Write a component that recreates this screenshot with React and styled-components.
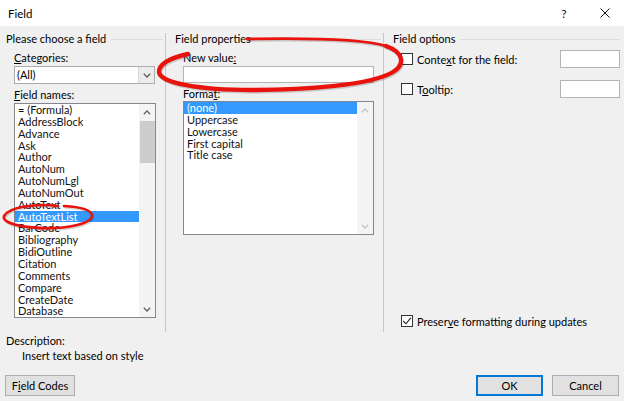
import styled, { createGlobalStyle } from "styled-components";

const GlobalStyle = createGlobalStyle`
  html, body {
    margin: 0;
    padding: 0;
  }
  body {
    background: #f0f0f0;
    font-family: Lato, "Noto Sans", "DejaVu Sans", sans-serif;
    color: #000;
  }
`;

const Dialog = styled.div`
  position: relative;
  width: 624px;
  height: 401px;
  background: #f0f0f0;
  font-size: 11px;
  overflow: hidden;
  display: flex;
  flex-direction: column;
`;

const TitleBar = styled.div`
  flex: none;
  height: 26px;
  background: #fff;
  display: flex;
  align-items: center;
  padding-left: 8px;
`;

const TitleText = styled.div`
  flex: 1;
  font-size: 11.5px;
`;

const TitleButton = styled.div`
  width: ${(p) => p.$w}px;
  height: 26px;
  display: flex;
  align-items: center;
  justify-content: center;
  font-size: 12px;
  color: #111;
`;

const Columns = styled.div`
  display: grid;
  grid-template-columns: 165px 218px 1fr;
  margin-top: 7px;
  height: 299px;
  flex: none;
`;

const Group = styled.section`
  display: flex;
  flex-direction: column;
  min-width: 0;
  padding: 0 ${(p) => p.$padRight}px 0 ${(p) => p.$padLeft}px;
  border-left: ${(p) => (p.$divider ? "1px solid #c6c6c6" : "none")};
`;

const GroupHeader = styled.div`
  display: flex;
  align-items: center;
  gap: 5px;
  height: 12px;
  line-height: 12px;
  white-space: nowrap;
  &::after {
    content: "";
    flex: 1;
    height: 1px;
    background: #dcdcdc;
  }
`;

const Indent = styled.div`
  display: flex;
  flex-direction: column;
  margin-left: 8px;
`;

const FieldLabel = styled.div`
  height: 14px;
  line-height: 14px;
  margin-top: ${(p) => p.$mt}px;
  white-space: nowrap;
`;

const Key = styled.u`
  text-decoration: underline;
  text-underline-offset: 1px;
`;

const Combo = styled.div`
  width: 141px;
  height: 18px;
  margin-top: 1px;
  box-sizing: border-box;
  border: 1px solid #acacac;
  background: #fff;
  display: flex;
  align-items: stretch;
`;

const ComboValue = styled.div`
  flex: 1;
  padding-left: 2px;
  line-height: 16px;
`;

const ComboArrow = styled.div`
  width: 15px;
  border-left: 1px solid #d6d6d6;
  background: #ececec;
  display: flex;
  align-items: center;
  justify-content: center;
`;

const TextBox = styled.div`
  width: ${(p) => p.$w}px;
  height: ${(p) => p.$h}px;
  margin-top: ${(p) => p.$mt || 0}px;
  box-sizing: border-box;
  border: 1px solid #b4b4b4;
  background: #fff;
  flex: none;
`;

const ListBox = styled.div`
  width: ${(p) => p.$w}px;
  height: ${(p) => p.$h}px;
  margin-top: ${(p) => p.$mt}px;
  box-sizing: border-box;
  border: 1px solid #828790;
  background: #fff;
  display: flex;
  overflow: hidden;
`;

const ListItems = styled.ul`
  list-style: none;
  margin: 0;
  padding: 0;
  flex: 1;
  min-width: 0;
`;

const ListItem = styled.li`
  height: 11.85px;
  line-height: 11.85px;
  padding-left: 3px;
  white-space: nowrap;
  color: ${(p) => (p.$selected ? "#fff" : "#111")};
  background: ${(p) => (p.$selected ? "#3399ff" : "transparent")};
`;

const ScrollBar = styled.div`
  width: 16px;
  flex: none;
  display: flex;
  flex-direction: column;
  background: #f4f4f4;
`;

const ScrollArrow = styled.div`
  height: 16px;
  flex: none;
  display: flex;
  align-items: center;
  justify-content: center;
`;

const ScrollTrack = styled.div`
  flex: 1;
  display: flex;
  flex-direction: column;
  align-items: center;
`;

const ScrollThumb = styled.div`
  width: 15px;
  height: ${(p) => p.$h}px;
  margin-top: 1px;
  background: #cdcdcd;
`;

const OptionRow = styled.div`
  display: flex;
  align-items: center;
  height: ${(p) => p.$h || 18}px;
  margin: ${(p) => p.$mt}px 0 ${(p) => p.$mb || 0}px 8px;
`;

const CheckBox = styled.span`
  width: 12px;
  height: 12px;
  flex: none;
  box-sizing: border-box;
  border: 1px solid #333;
  background: #fff;
  display: flex;
  align-items: center;
  justify-content: center;
`;

const OptionLabel = styled.span`
  flex: 1;
  margin-left: 4px;
  white-space: nowrap;
`;

const Footer = styled.div`
  flex: 1;
  display: flex;
  flex-direction: column;
  padding: 2px 5px 0 6px;
`;

const Line = styled.div`
  line-height: 14px;
  height: 14px;
  margin-top: ${(p) => p.$mt || 0}px;
  padding-left: ${(p) => p.$indent || 0}px;
`;

const ButtonRow = styled.div`
  display: flex;
  align-items: center;
  gap: 9px;
  margin: 12px 0 0 -1px;
`;

const Spacer = styled.div`
  flex: 1;
`;

const Button = styled.button`
  width: ${(p) => p.$w}px;
  height: 21px;
  padding: 0;
  font: inherit;
  font-size: 11px;
  color: #000;
  background: #e1e1e1;
  border: 1px solid ${(p) => (p.$primary ? "#0078d7" : "#adadad")};
  box-shadow: ${(p) => (p.$primary ? "inset 0 0 0 1px #0078d7" : "none")};
`;

const Annotations = styled.svg`
  position: absolute;
  left: 0;
  top: 0;
  pointer-events: none;
`;

const Chevron = ({ down, color = "#606060" }) => (
  <svg width="8" height="5" viewBox="0 0 8 5">
    <polyline
      points={down ? "0.8,0.8 4,4 7.2,0.8" : "0.8,4.2 4,1 7.2,4.2"}
      fill="none"
      stroke={color}
      strokeWidth="1.3"
    />
  </svg>
);

const fieldNames = [
  "= (Formula)",
  "AddressBlock",
  "Advance",
  "Ask",
  "Author",
  "AutoNum",
  "AutoNumLgl",
  "AutoNumOut",
  "AutoText",
  "AutoTextList",
  "BarCode",
  "Bibliography",
  "BidiOutline",
  "Citation",
  "Comments",
  "Compare",
  "CreateDate",
  "Database",
];

const formats = ["(none)", "Uppercase", "Lowercase", "First capital", "Title case"];

// hand-drawn marker loops on top of the dialog
const loopTop = "M 247 39 C 300 38, 360 38, 386 46";
const loopBody =
  "M 386 46 C 403 52, 406 64, 393 72 C 372 85, 305 90, 252 90 C 200 90, 160 83, 159 72 C 159 64, 170 58, 188 54";
const smallLoop =
  "M 58 206 C 36 203, 9 207, 4 216 C 1 224, 28 229, 55 228 C 76 227, 93 222, 92 215 C 91 210, 80 207, 64 206";

export default function App() {
  return (
    <>
      <GlobalStyle />
      <Dialog>
        <TitleBar>
          <TitleText>Field</TitleText>
          <TitleButton $w={44}>?</TitleButton>
          <TitleButton $w={38}>
            <svg width="10" height="10" viewBox="0 0 10 10">
              <path d="M0.5 0.5 L9.5 9.5 M9.5 0.5 L0.5 9.5" stroke="#111" strokeWidth="1" />
            </svg>
          </TitleButton>
        </TitleBar>

        <Columns>
          <Group $padLeft={6} $padRight={2}>
            <GroupHeader>Please choose a field</GroupHeader>
            <Indent>
              <FieldLabel $mt={6}>
                <Key>C</Key>ategories:
              </FieldLabel>
              <Combo>
                <ComboValue>(All)</ComboValue>
                <ComboArrow>
                  <Chevron down />
                </ComboArrow>
              </Combo>
              <FieldLabel $mt={4}>
                <Key>F</Key>ield names:
              </FieldLabel>
              <ListBox $w={142} $h={215} $mt={1}>
                <ListItems>
                  {fieldNames.map((name) => (
                    <ListItem key={name} $selected={name === "AutoTextList"}>
                      {name}
                    </ListItem>
                  ))}
                </ListItems>
                <ScrollBar>
                  <ScrollArrow>
                    <Chevron />
                  </ScrollArrow>
                  <ScrollTrack>
                    <ScrollThumb $h={42} />
                  </ScrollTrack>
                  <ScrollArrow>
                    <Chevron down />
                  </ScrollArrow>
                </ScrollBar>
              </ListBox>
            </Indent>
          </Group>

          <Group $divider $padLeft={9} $padRight={2}>
            <GroupHeader>Field properties</GroupHeader>
            <Indent>
              <FieldLabel $mt={6}>
                New value<Key>:</Key>
              </FieldLabel>
              <TextBox $w={191} $h={17} $mt={1} />
              <FieldLabel $mt={4}>
                Forma<Key>t</Key>:
              </FieldLabel>
              <ListBox $w={191} $h={134} $mt={0}>
                <ListItems>
                  {formats.map((f) => (
                    <ListItem key={f} $selected={f === "(none)"}>
                      {f}
                    </ListItem>
                  ))}
                </ListItems>
                <ScrollBar>
                  <ScrollArrow>
                    <Chevron color="#c4c4c4" />
                  </ScrollArrow>
                  <ScrollTrack />
                  <ScrollArrow>
                    <Chevron down color="#c4c4c4" />
                  </ScrollArrow>
                </ScrollBar>
              </ListBox>
            </Indent>
          </Group>

          <Group $divider $padLeft={9} $padRight={4}>
            <GroupHeader>Field options</GroupHeader>
            <OptionRow $mt={5}>
              <CheckBox />
              <OptionLabel>
                Conte<Key>x</Key>t for the field:
              </OptionLabel>
              <TextBox $w={60} $h={18} />
            </OptionRow>
            <OptionRow $mt={12}>
              <CheckBox />
              <OptionLabel>
                T<Key>o</Key>oltip:
              </OptionLabel>
              <TextBox $w={60} $h={18} />
            </OptionRow>
            <Spacer />
            <OptionRow $h={12} $mt={0} $mb={5}>
              <CheckBox>
                <svg width="10" height="10" viewBox="0 0 10 10">
                  <polyline points="1.2,5 4,7.8 8.8,1.8" fill="none" stroke="#222" strokeWidth="1.1" />
                </svg>
              </CheckBox>
              <OptionLabel>
                Preser<Key>v</Key>e formatting during updates
              </OptionLabel>
            </OptionRow>
          </Group>
        </Columns>

        <Footer>
          <Line>Description:</Line>
          <Line $mt={1} $indent={16}>
            Insert text based on style
          </Line>
          <ButtonRow>
            <Button $w={70}>
              F<Key>i</Key>eld Codes
            </Button>
            <Spacer />
            <Button $w={67} $primary>
              OK
            </Button>
            <Button $w={67}>Cancel</Button>
          </ButtonRow>
        </Footer>

        <Annotations width="624" height="401" viewBox="0 0 624 401">
          <g transform="translate(1 1.5)" stroke="rgba(0,0,0,0.16)" fill="none" strokeLinecap="round">
            <path d={loopTop} strokeWidth="2.8" />
            <path d={loopBody} strokeWidth="4.4" />
            <path d={smallLoop} strokeWidth="2.6" />
          </g>
          <g stroke="#e8130d" fill="none" strokeLinecap="round">
            <path d={loopTop} strokeWidth="2.8" />
            <path d={loopBody} strokeWidth="4.4" />
            <path d={smallLoop} strokeWidth="2.6" />
          </g>
        </Annotations>
      </Dialog>
    </>
  );
}
